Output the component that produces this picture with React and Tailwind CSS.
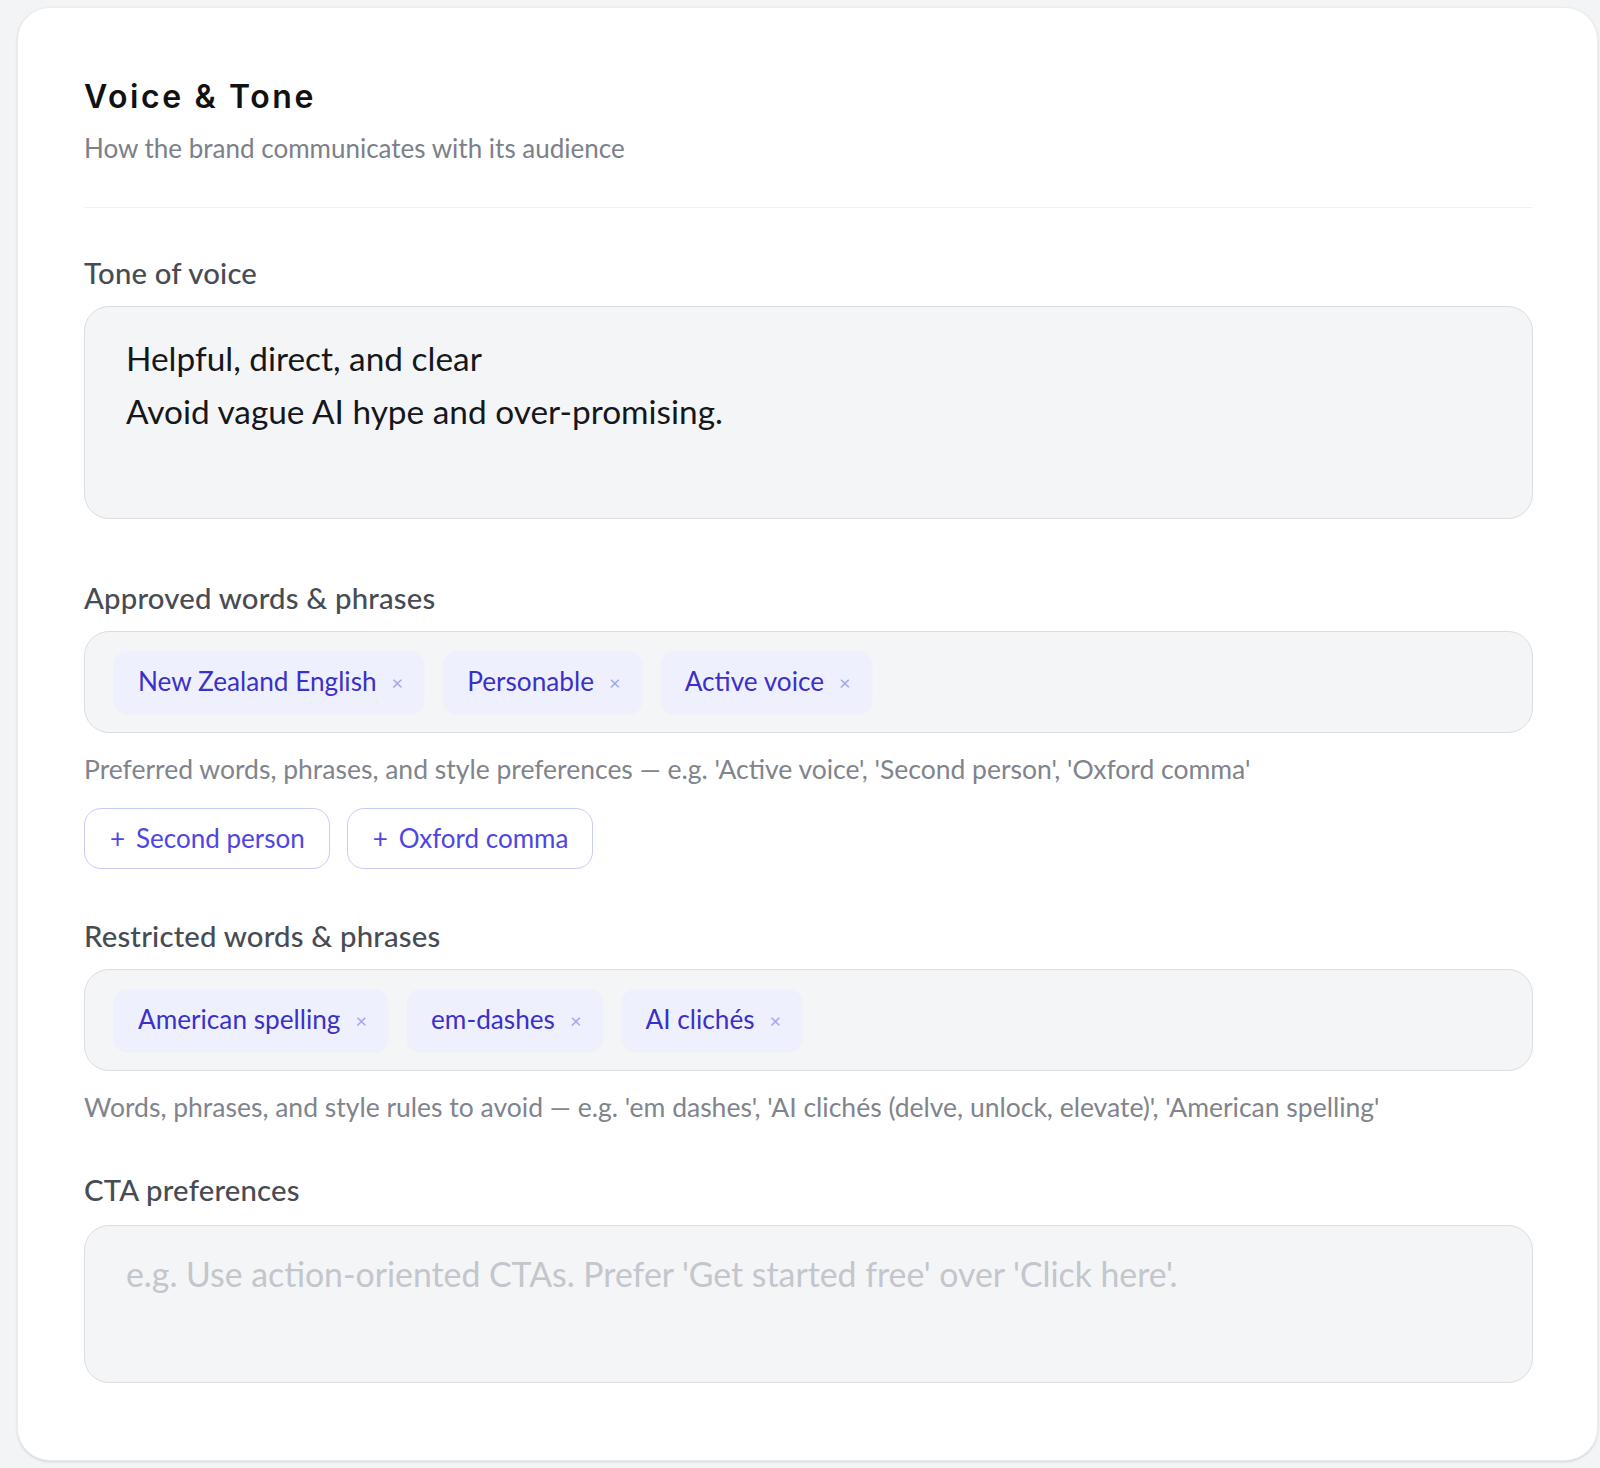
import { useState } from 'react';

const approved = ['New Zealand English', 'Personable', 'Active voice'];
const restricted = ['American spelling', 'em-dashes', 'AI clichés'];
const suggestions = ['Second person', 'Oxford comma'];

function Tag({ label }) {
  return (
    <span className="flex h-[62px] items-center gap-[15px] rounded-[14px] bg-[#eff0fe] pl-[24px] pr-[21px] text-[26.2px] text-[#3b30c8] shadow-[0_1px_2px_rgba(99,102,241,0.05)]">
      {label}
      <span className="text-[20px] leading-none text-[#a3a6f0]">×</span>
    </span>
  );
}

function TagBox({ tags }) {
  return (
    <div className="flex h-[102px] items-center gap-[19px] rounded-[25px] border border-[#dcdde1] bg-[#f4f5f7] px-[29px]">
      {tags.map((t) => (
        <Tag key={t} label={t} />
      ))}
    </div>
  );
}

function Label({ children }) {
  return <div className="text-[29.3px] leading-[36px] font-medium text-[#474c54] tracking-[0.2px]">{children}</div>;
}

function Help({ children }) {
  return <div className="text-[26.5px] leading-[34px] text-[#80848c]">{children}</div>;
}

export default function App() {
  const [tone] = useState('Helpful, direct, and clear\nAvoid vague AI hype and over-promising.');

  return (
    <div className="min-h-screen bg-[#f3f4f6] pt-[7px] pl-[17px] pr-[2px] pb-[5px]" style={{ fontFamily: 'Lato, "Open Sans", sans-serif' }}>
      <div className="rounded-[33px] border border-[#ebecef] bg-white pl-[66px] pr-[64px] pt-[71px] pb-[77px] shadow-sm">
        <div className="border-b border-[#f0f1f3] pb-[42px]">
          <h1 className="text-[32px] leading-[36px] font-semibold text-[#111] tracking-[2.6px]" style={{ fontFamily: 'Inter, sans-serif' }}>
            Voice &amp; Tone
          </h1>
          <p className="mt-[16px] text-[26px] leading-[34px] text-[#7b8089]">How the brand communicates with its audience</p>
        </div>

        <div className="mt-[47px]">
          <Label>Tone of voice</Label>
          <div className="mt-[15px] h-[213px] rounded-[25px] border border-[#dcdde1] bg-[#f4f5f7] px-[41px] pt-[25px] text-[33.4px] leading-[53px] text-[#15171a] whitespace-pre-line">
            {tone}
          </div>
        </div>

        <div className="mt-[61px]">
          <Label>Approved words &amp; phrases</Label>
          <div className="mt-[15px]">
            <TagBox tags={approved} />
          </div>
          <div className="mt-[19px]">
            <Help>Preferred words, phrases, and style preferences — e.g. 'Active voice', 'Second person', 'Oxford comma'</Help>
          </div>
          <div className="mt-[22px] flex gap-[17px]">
            {suggestions.map((s) => (
              <button key={s} className="flex h-[61px] items-center gap-[11px] rounded-[17px] border border-[#c9ccf6] bg-white pl-[25px] pr-[24px] text-[26px] text-[#4f45e4]">
                <span>+</span>
                {s}
              </button>
            ))}
          </div>
        </div>

        <div className="mt-[49px]">
          <Label>Restricted words &amp; phrases</Label>
          <div className="mt-[15px]">
            <TagBox tags={restricted} />
          </div>
          <div className="mt-[19px]">
            <Help>Words, phrases, and style rules to avoid — e.g. 'em dashes', 'AI clichés (delve, unlock, elevate)', 'American spelling'</Help>
          </div>
        </div>

        <div className="mt-[48px]">
          <Label>CTA preferences</Label>
          <div className="mt-[17px] h-[158px] rounded-[25px] border border-[#dcdde1] bg-[#f4f5f7] px-[41px] pt-[22px] text-[33.8px] leading-[53px] text-[#c3c6cc]">
            e.g. Use action-oriented CTAs. Prefer 'Get started free' over 'Click here'.
          </div>
        </div>
      </div>
    </div>
  );
}
